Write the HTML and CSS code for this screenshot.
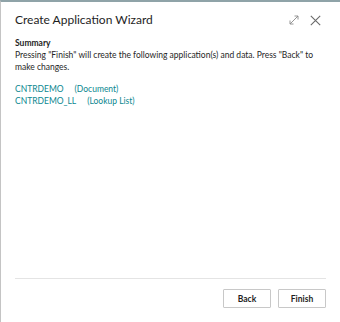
FILE: index.html
```html
<!DOCTYPE html>
<html lang="en">
<head>
<meta charset="UTF-8">
<title>Create Application Wizard</title>
<link rel="stylesheet" href="styles.css">
</head>
<body>
<div class="dialog">
    <!-- header -->
    <div class="dialog-header">
        <div class="dialog-title">Create Application Wizard</div>
        <div class="dialog-icons">
            <svg class="icon" width="10" height="10" viewBox="0 0 10 10">
                <path d="M1 9 L9 1 M5.5 1 H9 V4.5 M1 5.5 V9 H4.5" fill="none" stroke="#8a8a8a" stroke-width="0.9"/>
            </svg>
            <svg class="icon" width="11" height="11" viewBox="0 0 11 11">
                <path d="M0.8 0.8 L10.2 10.2 M10.2 0.8 L0.8 10.2" fill="none" stroke="#6a6a6a" stroke-width="1.1"/>
            </svg>
        </div>
    </div>

    <!-- body -->
    <div class="dialog-body">
        <div class="summary-title">Summary</div>
        <div class="summary-text">Pressing "Finish" will create the following application(s) and data. Press "Back" to make changes.</div>
        <div class="app-list">
            <div class="app-row"><span class="app-name">CNTRDEMO</span><span class="app-type">(Document)</span></div>
            <div class="app-row"><span class="app-name">CNTRDEMO_LL</span><span class="app-type">(Lookup List)</span></div>
        </div>
    </div>

    <!-- footer -->
    <div class="dialog-footer">
        <button class="btn">Back</button>
        <button class="btn">Finish</button>
    </div>
</div>
</body>
</html>
```

FILE: styles.css
```css
/* global */
body, html {
    margin: 0;
    padding: 0;
    width: 340px;
    height: 322px;
    overflow: hidden;
    background: #ffffff;
    font-family: Lato, "Noto Sans", sans-serif;
}

/* dialog frame */
.dialog {
    box-sizing: border-box;
    width: 340px;
    height: 322px;
    border-top: 2px solid #8fa3a8;
    border-left: 1px solid #c4c4c4;
    display: flex;
    flex-direction: column;
    background: #fff;
}

/* header */
.dialog-header {
    display: flex;
    justify-content: space-between;
    align-items: center;
    padding: 10px 19px 0 14px;
    height: 16px;
}

.dialog-title {
    font-size: 12px;
    line-height: 16px;
    color: #1e1e1e;
}

.dialog-icons {
    display: flex;
    align-items: center;
    gap: 11px;
}

.icon {
    display: block;
}

/* body */
.dialog-body {
    flex: 1;
    padding: 9px 20px 0 14px;
    font-size: 8.5px;
    line-height: 12px;
    color: #262626;
}

.summary-title {
    font-weight: bold;
    color: #1e1e1e;
}

.app-list {
    margin-top: 10px;
}

.app-row {
    color: #0a8790;
}

.app-name {
    margin-right: 11px;
}

/* footer */
.dialog-footer {
    margin: 0 14px 0 14px;
    border-top: 1px solid #e4e4e4;
    display: flex;
    justify-content: flex-end;
    gap: 7px;
    padding: 10px 0 14px;
}

.btn {
    box-sizing: border-box;
    width: 48px;
    height: 19px;
    padding: 0;
    border: 1px solid #c8c8c8;
    border-radius: 1px;
    background: #fff;
    font-family: Lato, "Noto Sans", sans-serif;
    font-size: 8.5px;
    font-weight: bold;
    color: #1e1e1e;
}
```
